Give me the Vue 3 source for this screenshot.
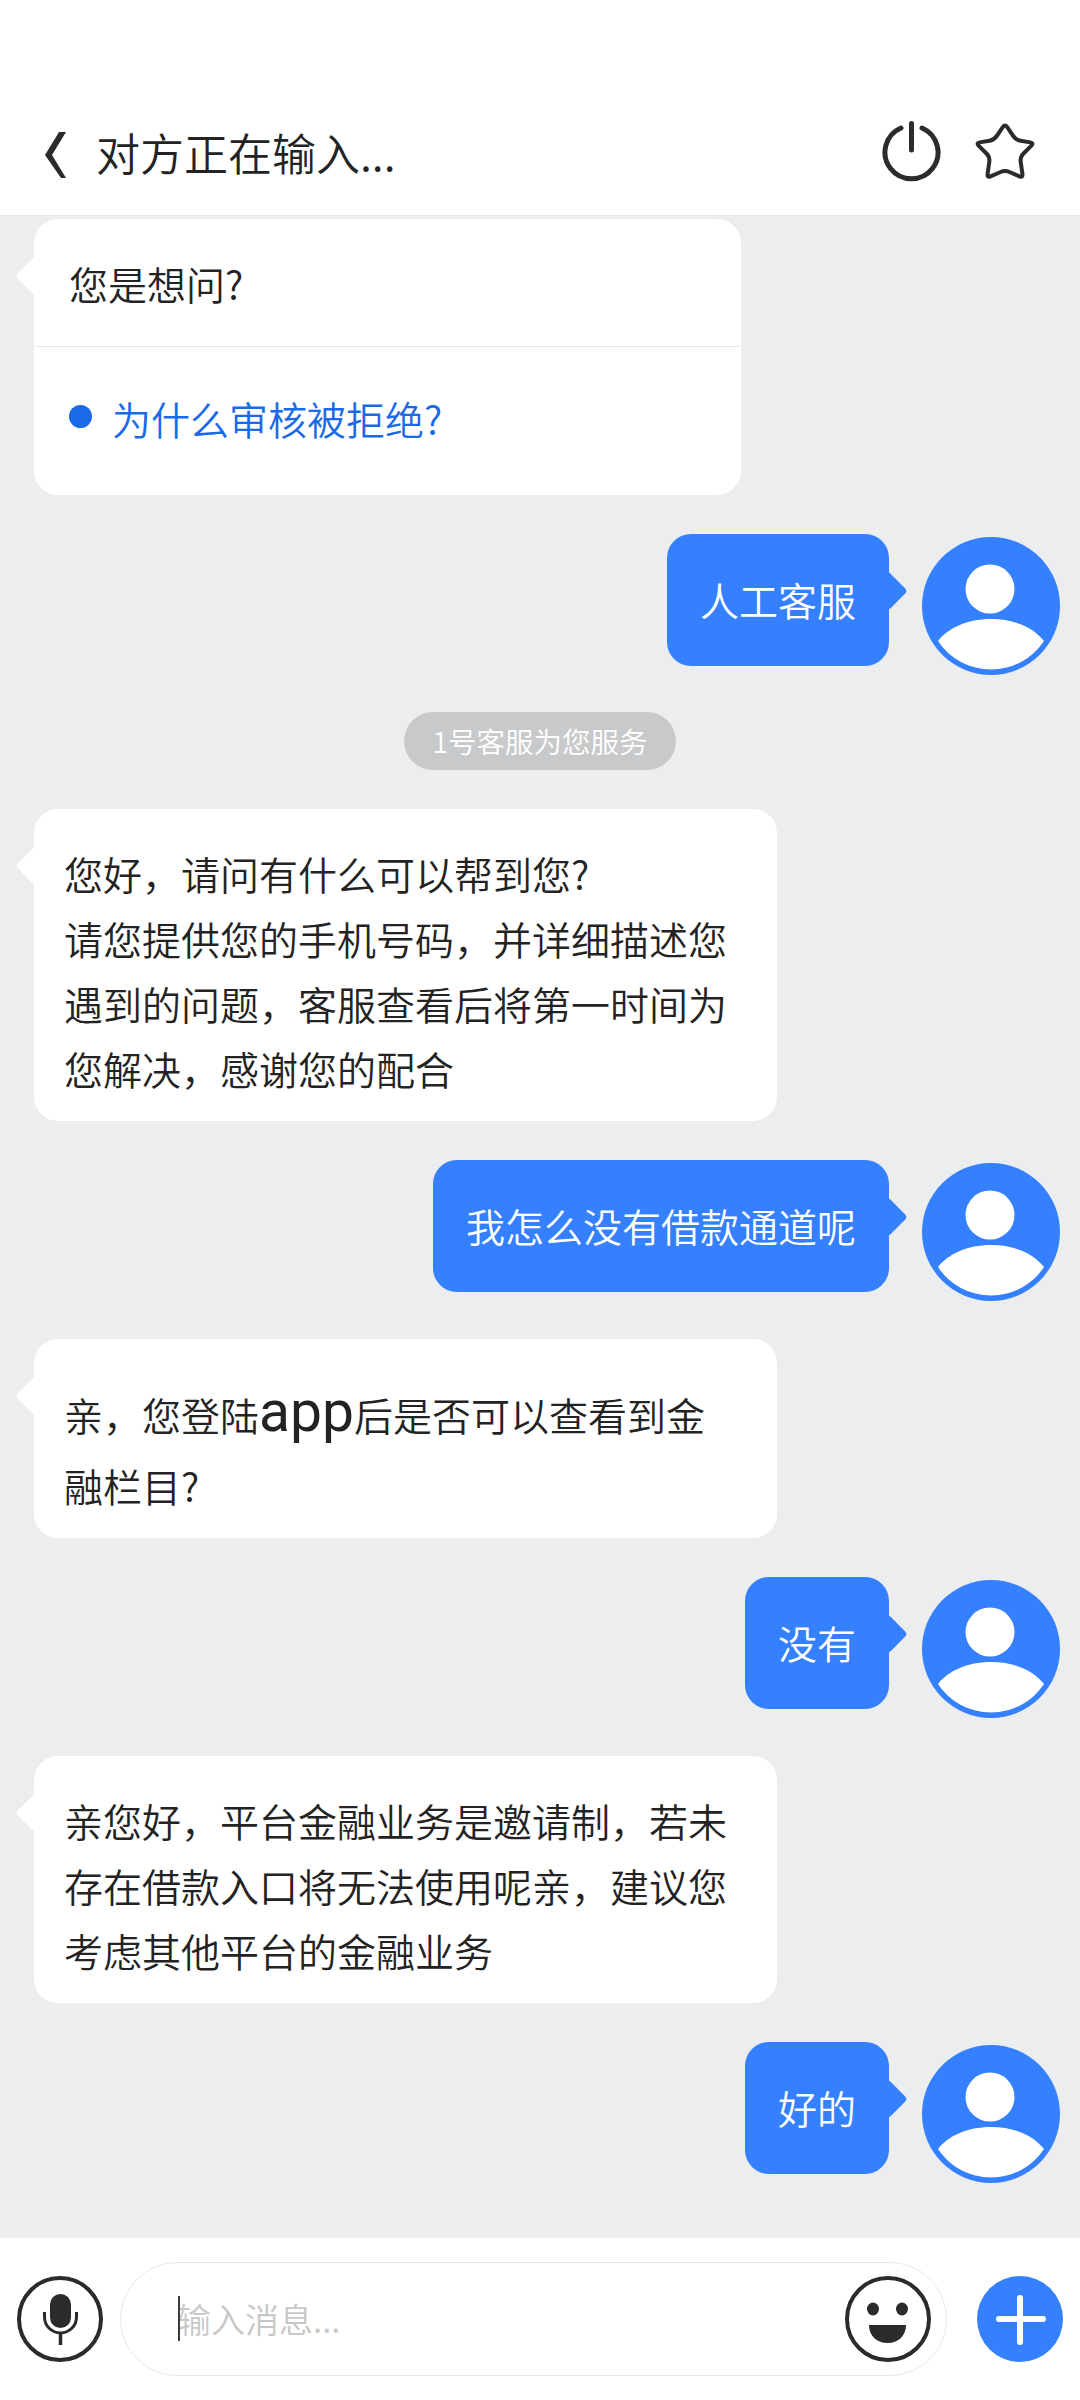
<script setup>
const avatarBody = 'M16 104C26 91 45 82 69 82s43 9 53 22A63.500 63.500 0 0 1 16 104z'
const starPath = 'M29.800 7.200Q32 4 34.200 7.200L40.250 16Q43 20 47.500 20.750L57.400 22.400Q61 23 58.200 25.800L50.500 33.500Q47 37 47.750 42.250L49.400 53.800Q50 58 46.400 56.400L36.500 52Q32 50 27.500 52L17.600 56.400Q14 58 14.600 53.800L16.250 42.250Q17 37 13.500 33.500L5.800 25.800Q3 23 6.600 22.400L16.500 20.750Q21 20 23.750 16z'
</script>

<template>
  <div class="page">
    <header class="top">
      <svg class="back" width="24" height="46" viewBox="0 0 24 46"><path d="M15 0h7L8 23l14 23h-5L1 23z" fill="#2b2b2b"/></svg>
      <span class="title">对方正在输入...</span>
      <svg class="power" width="60" height="62" viewBox="0 0 60 62" fill="none" stroke="#2b2b2b" stroke-width="5" stroke-linecap="round">
        <path d="M20 8A26.500 26.500 0 1 0 41 8"/>
        <path d="M30.500 3.500v26.500"/>
      </svg>
      <svg class="star" width="64" height="62" viewBox="0 0 64 62" fill="none" stroke="#2b2b2b" stroke-width="4" stroke-linejoin="round">
        <path :d="starPath"/>
      </svg>
    </header>

    <main class="chat">
      <div class="bubble left first">
        <div class="ask">您是想问?</div>
        <div class="link"><i class="dot"></i>为什么审核被拒绝?</div>
      </div>

      <div class="row">
        <div class="bubble right">人工客服</div>
        <svg class="avatar" viewBox="0 0 138 138"><circle cx="69" cy="69" r="69" fill="#3480fe"/><circle cx="68" cy="52" r="24.500" fill="#fff"/><path :d="avatarBody" fill="#fff"/></svg>
      </div>

      <div class="sys"><span class="one">1</span>号客服为您服务</div>

      <div class="bubble left">您好，请问有什么可以帮到您?<br>请您提供您的手机号码，并详细描述您遇到的问题，客服查看后将第一时间为您解决，感谢您的配合</div>

      <div class="row">
        <div class="bubble right">我怎么没有借款通道呢</div>
        <svg class="avatar" viewBox="0 0 138 138"><circle cx="69" cy="69" r="69" fill="#3480fe"/><circle cx="68" cy="52" r="24.500" fill="#fff"/><path :d="avatarBody" fill="#fff"/></svg>
      </div>

      <div class="bubble left">亲，您登陆<span class="app">app</span>后是否可以查看到金<br>融栏目?</div>

      <div class="row">
        <div class="bubble right">没有</div>
        <svg class="avatar" viewBox="0 0 138 138"><circle cx="69" cy="69" r="69" fill="#3480fe"/><circle cx="68" cy="52" r="24.500" fill="#fff"/><path :d="avatarBody" fill="#fff"/></svg>
      </div>

      <div class="bubble left">亲您好，平台金融业务是邀请制，若未存在借款入口将无法使用呢亲，建议您考虑其他平台的金融业务</div>

      <div class="row">
        <div class="bubble right">好的</div>
        <svg class="avatar" viewBox="0 0 138 138"><circle cx="69" cy="69" r="69" fill="#3480fe"/><circle cx="68" cy="52" r="24.500" fill="#fff"/><path :d="avatarBody" fill="#fff"/></svg>
      </div>
    </main>

    <footer class="bar">
      <svg class="ico" viewBox="0 0 86 86">
        <circle cx="43" cy="43" r="41" fill="#fff" stroke="#2b2b2b" stroke-width="4"/>
        <rect x="33" y="18" width="21" height="34" rx="10.500" fill="#2b2b2b"/>
        <path d="M27.500 36v5a16 16 0 0 0 32 0v-5" fill="none" stroke="#2b2b2b" stroke-width="3"/>
        <path d="M43.500 57v12" stroke="#2b2b2b" stroke-width="3.500"/>
      </svg>
      <div class="input">
        <i class="caret"></i>
        <span class="ph">输入消息...</span>
        <svg class="ico" viewBox="0 0 86 86">
          <circle cx="43" cy="43" r="41" fill="#fff" stroke="#2b2b2b" stroke-width="4"/>
          <ellipse cx="28" cy="33" rx="6" ry="6.500" fill="#2b2b2b"/>
          <ellipse cx="57" cy="33" rx="6" ry="6.500" fill="#2b2b2b"/>
          <path d="M24 49h37c0 11-8 18-18.500 18S24 60 24 49z" fill="#2b2b2b"/>
        </svg>
      </div>
      <svg class="ico" viewBox="0 0 86 86">
        <circle cx="43" cy="43" r="43" fill="#3480fe"/>
        <path d="M43 22v44M22 43h44" stroke="#fff" stroke-width="6" stroke-linecap="round"/>
      </svg>
    </footer>
  </div>
</template>

<style>
html, body { margin: 0; background: #fff; }
</style>

<style scoped>
.page {
  width: 1080px; height: 2400px; display: flex; flex-direction: column; overflow: hidden;
  font-family: "Noto Sans CJK SC", "Noto Sans", sans-serif; font-weight: 350; color: #232323; background: #fff;
}
.top {
  height: 216px; flex-shrink: 0; box-sizing: border-box; padding: 118px 43px 0 44px;
  display: flex; align-items: flex-start; border-bottom: 1px solid #e6e7e9;
}
.back { margin-top: 14px; }
.title { margin-left: 28px; font-size: 44px; line-height: 68px; flex: 1; }
.power { margin-top: 2px; }
.star { margin: 2px 0 0 32px; }

.chat {
  flex: 1; background: #ecedef; padding: 3px 20px 0;
  display: flex; flex-direction: column; align-items: flex-start; gap: 39px;
}
.bubble {
  position: relative; box-sizing: border-box; font-size: 39px; line-height: 65px; border-radius: 24px;
}
.bubble::before {
  content: ''; position: absolute; top: 43px; width: 28px; height: 28px;
  transform: rotate(45deg); border-radius: 4px; background: inherit;
}
.left { width: 743px; margin-left: 14px; background: #fff; padding: 32px 31px 20px 30px; }
.left::before { left: -13px; }
.first { width: 707px; padding: 0; }
.ask { height: 128px; box-sizing: border-box; padding: 32px 36px 0 35px; border-bottom: 1px solid #e8e8ea; }
.link {
  height: 148px; box-sizing: border-box; padding: 39px 36px 0; display: flex; align-items: flex-start;
  color: #1a6ae8;
}
.dot { width: 23px; height: 23px; border-radius: 50%; background: #1a6ae8; margin: 19px 20px 0 -1px; }
.app { font-family: Roboto, sans-serif; font-weight: 400; font-size: 57px; line-height: 82px; }

.row { align-self: flex-end; display: flex; align-items: flex-start; gap: 33px; height: 140px; }
.right { background: #3480fe; color: #fff; padding: 33px 33px; height: 132px; }
.right::before { right: -13px; }
.avatar { width: 138px; height: 138px; margin-top: 3px; }

.sys {
  align-self: center; margin-top: -1px; height: 58px; padding: 0 28px; border-radius: 29px;
  background: #c8c9cb; color: #fff; font-size: 28.500px; line-height: 58px;
}
.one { letter-spacing: -6px; margin-right: 6px; }

.bar {
  height: 162px; flex-shrink: 0; box-sizing: border-box; padding: 24px 17px 0;
  display: flex; align-items: flex-start;
}
.ico { width: 86px; height: 86px; flex-shrink: 0; margin-top: 14px; }
.input {
  width: 827px; height: 114px; box-sizing: border-box; margin: 0 30px 0 17px; padding: 0 15px 0 56px;
  border: 1.500px solid #e8e9eb; border-radius: 57px; display: flex; align-items: flex-start; position: relative;
}
.input .ico { margin-top: 13px; }
.caret { position: absolute; left: 57px; top: 33px; width: 2px; height: 45px; background: #3a3a3a; }
.ph { flex: 1; font-size: 34px; line-height: 112px; color: #c8c8c8; }
</style>
